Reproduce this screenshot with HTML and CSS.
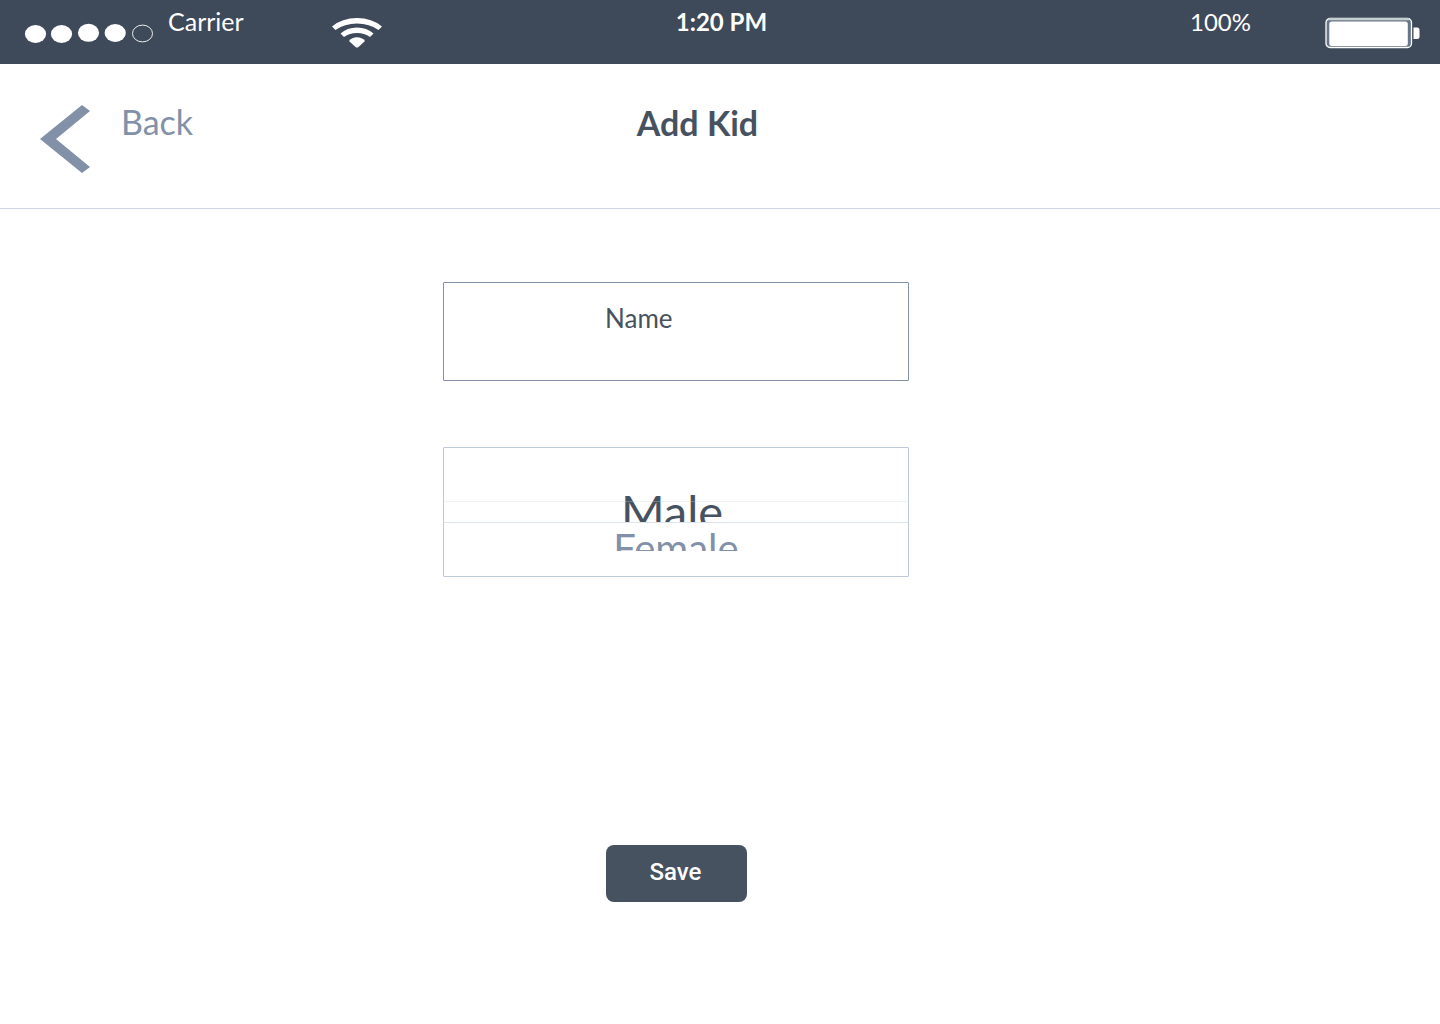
FILE: index.html
```html
<!DOCTYPE html>
<html lang="en">
<head>
<meta charset="utf-8">
<meta name="viewport" content="width=device-width, initial-scale=1">
<title>Add Kid</title>
<link rel="stylesheet" href="styles.css">
</head>
<body>
<div class="status">
  <div class="status-left">
    <svg class="signal" width="130" height="20" viewBox="0 0 130 20" aria-hidden="true">
      <g fill="#fff">
        <ellipse cx="11.5" cy="11" rx="10.6" ry="9"/>
        <ellipse cx="37.5" cy="11" rx="10.6" ry="9"/>
        <ellipse cx="64.5" cy="9.8" rx="10.6" ry="9"/>
        <ellipse cx="91.2" cy="10" rx="10.6" ry="9"/>
      </g>
      <ellipse cx="118.5" cy="10.5" rx="10" ry="8.4" fill="none" stroke="#fff" stroke-width="0.9"/>
    </svg>
    <span class="status-text carrier">Carrier</span>
    <svg class="wifi" width="52" height="32" viewBox="0 0 52 32" aria-hidden="true">
      <g fill="#fff">
        <path d="M1 10.500Q11 2 26 2T51 10.500L47.500 14Q38.500 7.500 26 7.500T4.500 14Z"/>
        <path d="M9.500 17.500Q16 11.500 26 11.500T42.500 17.500L39 21Q33.500 17 26 17T13 21Z"/>
        <path d="M18 25Q21 21.300 26 21.300T34 25L27.500 31Q26 32 24.500 31Z"/>
      </g>
    </svg>
  </div>
  <time class="status-text time">1:20 PM</time>
  <div class="status-right">
    <span class="status-text">100%</span>
    <svg class="battery" width="96" height="32" viewBox="0 0 96 32" aria-hidden="true">
      <rect x="1" y="1.500" width="85.500" height="29" rx="4" fill="#68758a" stroke="#fff" stroke-width="1.300"/>
      <path d="M3.500 2.200H84" stroke="#c6cfd0" stroke-width="2.200"/>
      <rect x="4.300" y="4.500" width="78.500" height="24.500" rx="2.500" fill="#fff"/>
      <path d="M88.500 10.500H92Q94.500 10.500 94.500 13V19.500Q94.500 22 92 22H88.500Z" fill="#fff"/>
    </svg>
  </div>
</div>
<header class="header">
  <a class="back" href="#">
    <svg width="50" height="68" viewBox="0 0 50 68" aria-hidden="true"><path d="M42 0L50 6L16 34L50 62L42 68L0 34Z" fill="#8291a8"/></svg>
    <span class="back-text">Back</span>
  </a>
  <h1 class="title">Add Kid</h1>
</header>
<main class="main">
  <form class="form">
    <input class="name" type="text" placeholder="Name" aria-label="Name">
    <fieldset class="picker" aria-label="Gender">
      <label class="option selected"><input class="radio" type="radio" name="gender" checked><span>Male</span></label>
      <label class="option other"><input class="radio" type="radio" name="gender"><span>Female</span></label>
    </fieldset>
    <button class="save" type="button">Save</button>
  </form>
</main>
</body>
</html>
```
FILE: styles.css
```css
* { box-sizing: border-box; }

body {
  margin: 0;
  background: #fff;
  color: #475260;
  font-family: Lato, sans-serif;
}

.status {
  display: grid;
  grid-template-columns: 1fr auto 1fr;
  min-height: 64px;
  padding: 8px 19px 0 22px;
  background: #3e4959;
  color: #fff;
}

.status-left,
.status-right {
  display: flex;
  align-items: flex-start;
}

.status-right { justify-content: flex-end; }

.status-text {
  font-size: 24px;
  line-height: 28px;
}

.time { font-weight: 700; }
.signal { margin: 15px 0 0 2px; }

.carrier {
  margin-left: 14px;
  font-size: 25px;
  line-height: 26px;
}

.wifi { margin: 8px 0 0 87px; }
.battery { margin: 9px 0 0 74px; }

.header {
  display: grid;
  grid-template-columns: 1fr auto 1fr;
  align-items: start;
  min-height: 145px;
  padding: 37px 85px 0 40px;
  border-bottom: 1px solid #cbd6e2;
}

.back {
  display: flex;
  justify-self: start;
  gap: 31px;
  padding-top: 4px;
  color: #8291a8;
  text-decoration: none;
}

.back-text {
  margin-top: -4px;
  font-size: 34px;
  line-height: 42px;
}

.title {
  margin: 0;
  font-size: 34px;
  line-height: 44px;
}

.main { padding: 73px 88px 48px 0; }

.form {
  display: flex;
  flex-direction: column;
  align-items: center;
  max-width: 466px;
  margin: 0 auto;
}

.name {
  width: 100%;
  height: 99px;
  padding: 0 20px 27px 161px;
  border: 1px solid #8291a8;
  border-radius: 1px;
  background: #fff;
  color: #475260;
  font: 26px Lato, sans-serif;
}

.name::placeholder { color: #475260; opacity: 1; }

.picker {
  position: relative;
  width: 100%;
  min-width: 0;
  margin: 66px 0 0;
  padding: 0 0 25px;
  border: 1px solid #bccad8;
  border-radius: 1px;
}

.picker::after {
  content: "";
  position: absolute;
  top: 53px;
  left: 0;
  right: 0;
  height: 1px;
  background: #cbd6e2;
  opacity: 0.3;
}

.option {
  display: flex;
  justify-content: center;
  overflow: hidden;
}

.selected {
  height: 75px;
  padding: 34px 8px 0 0;
  border-bottom: 1px solid #dbe3ec;
  font-size: 47px;
  line-height: 58px;
}

.other {
  height: 28px;
  color: #8291a8;
  font-size: 40px;
  line-height: 50px;
}

.radio {
  position: absolute;
  margin: 0;
  opacity: 0;
}

.save {
  width: 141px;
  height: 57px;
  margin-top: 268px;
  padding: 0 1px 4px 0;
  border: 0;
  border-radius: 8px;
  background: #475260;
  color: #fff;
  font: 500 24px Roboto, sans-serif;
}
```
